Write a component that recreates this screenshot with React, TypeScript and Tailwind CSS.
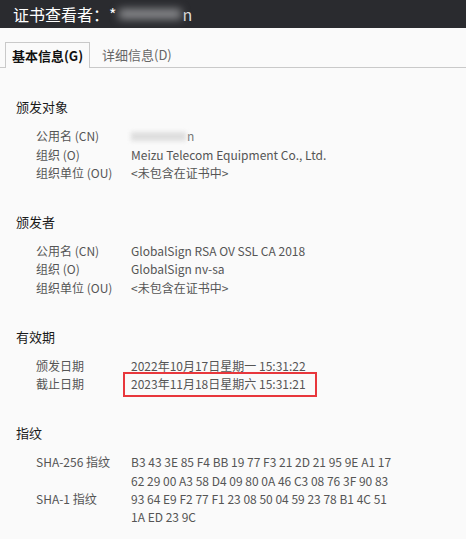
import React from 'react';

const FONT = { fontFamily: '"Noto Sans CJK SC", "Liberation Sans", sans-serif' };

type Row = { label: string; value: React.ReactNode; highlight?: boolean };

const sections: { title: string; rows: Row[] }[] = [
  {
    title: '颁发对象',
    rows: [
      {
        label: '公用名 (CN)',
        value: (
          <span className="inline-flex items-center">
            <span className="inline-block h-[9px] w-[55px] bg-[#dedede] blur-[2px]" />
            <span className="ml-[1px] text-[#777]">n</span>
          </span>
        ),
      },
      { label: '组织 (O)', value: 'Meizu Telecom Equipment Co., Ltd.' },
      { label: '组织单位 (OU)', value: '<未包含在证书中>' },
    ],
  },
  {
    title: '颁发者',
    rows: [
      { label: '公用名 (CN)', value: 'GlobalSign RSA OV SSL CA 2018' },
      { label: '组织 (O)', value: 'GlobalSign nv-sa' },
      { label: '组织单位 (OU)', value: '<未包含在证书中>' },
    ],
  },
  {
    title: '有效期',
    rows: [
      { label: '颁发日期', value: '2022年10月17日星期一 15:31:22' },
      { label: '截止日期', value: '2023年11月18日星期六 15:31:21', highlight: true },
    ],
  },
  {
    title: '指纹',
    rows: [
      {
        label: 'SHA-256 指纹',
        value: (
          <>
            <div>B3 43 3E 85 F4 BB 19 77 F3 21 2D 21 95 9E A1 17</div>
            <div>62 29 00 A3 58 D4 09 80 0A 46 C3 08 76 3F 90 83</div>
          </>
        ),
      },
      {
        label: 'SHA-1 指纹',
        value: (
          <>
            <div>93 64 E9 F2 77 F1 23 08 50 04 59 23 78 B1 4C 51</div>
            <div>1A ED 23 9C</div>
          </>
        ),
      },
    ],
  },
];

function Section({ title, rows }: { title: string; rows: Row[] }) {
  return (
    <div className="flex flex-col">
      <div className="text-[13px] leading-[18px] text-[#1b1b1b]">{title}</div>
      <div className="mt-[11px] flex flex-col pl-[20px]">
        {rows.map(r => (
          <div key={r.label} className="flex text-[12px] leading-[18.25px] text-[#555]">
            <div className="w-[95px] shrink-0">{r.label}</div>
            <div className="relative">
              {r.value}
              {r.highlight && (
                <div className="absolute left-[-8px] right-[-11px] top-[-3px] bottom-[-4px] border-2 border-[#e8373c]" />
              )}
            </div>
          </div>
        ))}
      </div>
    </div>
  );
}

export default function App() {
  return (
    <div className="w-[466px] h-[539px] overflow-hidden bg-[#fafafa] flex flex-col" style={FONT}>
      <div className="h-[28px] bg-[#2a2b2f] flex items-center pl-[13px] text-white text-[16px]">
        <span>证书查看者：</span>
        <span>*</span>
        <span className="inline-block h-[10px] w-[62px] ml-[2px] bg-[#8c8d90] blur-[4px]" />
        <span className="ml-[2px] text-[#ddd]">n</span>
      </div>

      <div className="mt-[14px] flex items-end border-b border-[#c9c9c9] pl-[5px] h-[26px]">
        <div className="h-[26px] -mb-px w-[85px] border border-b-0 border-[#c9c9c9] bg-[#fafafa] flex items-center justify-center text-[13px] font-bold text-[#111]">
          基本信息(G)
        </div>
        <div className="h-[25px] flex items-center pl-[12px] text-[13px] text-[#666]">详细信息(D)</div>
      </div>

      <div className="flex flex-col gap-[31px] pl-[16px] pt-[30px]">
        {sections.map(s => (
          <Section key={s.title} title={s.title} rows={s.rows} />
        ))}
      </div>
    </div>
  );
}
